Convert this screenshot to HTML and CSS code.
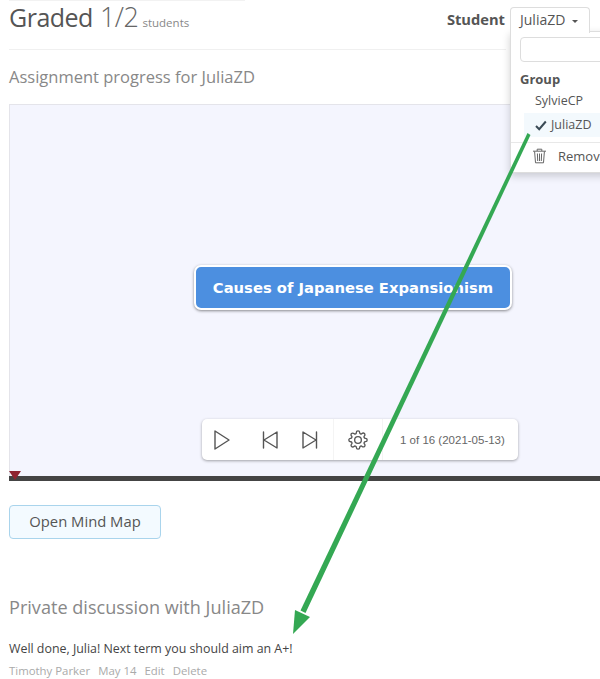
FILE: index.html
```html
<!DOCTYPE html>
<html lang="en">
<head>
<meta charset="utf-8">
<title>Graded</title>
<link rel="stylesheet" href="styles.css">
</head>
<body>
<div class="page">
  <div class="topline"></div>
  <header class="head">
    <h1 class="title">Graded <span class="count">1/2</span> <small class="unit">students</small></h1>
    <div class="picker">
      <span class="picker-label">Student</span>
      <div class="tab">JuliaZD <span class="caret"></span></div>
    </div>
  </header>
  <h2 class="section">Assignment progress for JuliaZD</h2>
  <div class="canvas">
    <div class="node">Causes of Japanese Expansionism</div>
    <div class="player">
      <div class="player-group">
        <svg class="pi" width="16" height="20" viewBox="0 0 16 20"><path d="M1 1 L15 10 L1 19 Z"/></svg>
        <svg class="pi prev" width="16" height="20" viewBox="0 0 16 20"><path d="M1.500 2 V18 M15 2 L2 10 L15 18 Z"/></svg>
        <svg class="pi next" width="16" height="20" viewBox="0 0 16 20"><path d="M14.500 2 V18 M1 2 L14 10 L1 18 Z"/></svg>
      </div>
      <div class="player-group gear">
        <svg class="pi gear-icon" width="20" height="20" viewBox="0 0 24 24"><circle cx="12" cy="12" r="4"/><path d="M19.4 15a1.65 1.65 0 0 0 .33 1.82l.06.06a2 2 0 0 1 0 2.83 2 2 0 0 1-2.83 0l-.06-.06a1.65 1.65 0 0 0-1.82-.33 1.65 1.65 0 0 0-1 1.51V21a2 2 0 0 1-2 2 2 2 0 0 1-2-2v-.09A1.65 1.65 0 0 0 9 19.4a1.65 1.65 0 0 0-1.82.33l-.06.06a2 2 0 0 1-2.83 0 2 2 0 0 1 0-2.83l.06-.06a1.65 1.65 0 0 0 .33-1.82 1.65 1.65 0 0 0-1.51-1H3a2 2 0 0 1-2-2 2 2 0 0 1 2-2h.09A1.65 1.65 0 0 0 4.6 9a1.65 1.65 0 0 0-.33-1.82l-.06-.06a2 2 0 0 1 0-2.83 2 2 0 0 1 2.83 0l.06.06a1.65 1.65 0 0 0 1.82.33H9a1.65 1.65 0 0 0 1-1.51V3a2 2 0 0 1 2-2 2 2 0 0 1 2 2v.09a1.65 1.65 0 0 0 1 1.51 1.65 1.65 0 0 0 1.82-.33l.06-.06a2 2 0 0 1 2.83 0 2 2 0 0 1 0 2.83l-.06.06a1.65 1.65 0 0 0-.33 1.82V9a1.65 1.65 0 0 0 1.51 1H21a2 2 0 0 1 2 2 2 2 0 0 1-2 2h-.09a1.65 1.65 0 0 0-1.51 1z"/></svg>
      </div>
      <div class="player-info">1 of 16 (2021-05-13)</div>
    </div>
  </div>
  <div class="timeline"><span class="marker"></span></div>
  <button class="open-btn" type="button">Open Mind Map</button>
  <h2 class="section discussion">Private discussion with JuliaZD</h2>
  <p class="comment">Well done, Julia! Next term you should aim an A+!</p>
  <div class="meta"><span>Timothy Parker</span><span>May 14</span><span>Edit</span><span>Delete</span></div>

  <div class="menu">
    <div class="search"></div>
    <div class="group-label">Group</div>
    <div class="opt">SylvieCP</div>
    <div class="opt selected"><svg class="check" width="12" height="11" viewBox="0 0 12 11"><path d="M1 6 L4.200 9.200 L10.800 1.500"/></svg>JuliaZD</div>
    <div class="remove">
      <svg class="trash" width="15" height="16" viewBox="0 0 15 16"><path d="M1 3.200h13M5.200 3V1.200h4.600V3M2.600 3.400l.9 11.400h8l.9-11.400M5.400 5.500l.3 7.500M7.500 5.500v7.500M9.600 5.500l-.3 7.500"/></svg>
      <span>Remove</span>
    </div>
  </div>

  <svg class="arrow" width="600" height="679" viewBox="0 0 600 679">
    <path class="arrow-shape" d="M527.500 133 L530.500 135 L305.500 613 L300.500 610.500 Z"/>
    <path class="arrow-shape" d="M293 634 L295 610 L310 617 Z"/>
  </svg>
</div>
</body>
</html>
```

FILE: styles.css
```css
* { box-sizing: border-box; }
html, body { margin: 0; padding: 0; background: #fff; }
.page {
  position: relative;
  width: 600px;
  height: 679px;
  overflow: hidden;
  padding-left: 9px;
  font-family: "Open Sans", "Noto Sans", sans-serif;
  color: #555;
}
.topline { position: absolute; left: 9px; top: 0; width: 236px; height: 1px; background: #f2f2f2; }
.head {
  display: flex;
  justify-content: space-between;
  align-items: flex-start;
  height: 50px;
  border-bottom: 1px solid #f0f0f0;
  margin-right: 94px;
}
.title { margin: 0; font-size: 25px; letter-spacing: -.5px; line-height: 34px; font-weight: 400; color: #555; white-space: nowrap; }
.count { font-size: 27px; font-weight: 300; letter-spacing: -.5px; color: #666; margin-left: 1px; }
.unit { font-size: 11.500px; letter-spacing: 0; color: #888; margin-left: -2px; }
.picker { display: flex; align-items: flex-start; position: absolute; right: 10px; top: 7px; z-index: 3; }
.picker-label { font-size: 14.700px; font-weight: 700; color: #555; line-height: 24px; margin-right: 5px; }
.tab {
  width: 80px; height: 26px; padding: 0 9px;
  border: 1px solid #ddd; border-bottom: 0; border-radius: 4px 4px 0 0;
  font-size: 14px; line-height: 23px; color: #555; background: #fff; white-space: nowrap;
}
.caret { display: inline-block; width: 0; height: 0; margin-left: 3px; vertical-align: middle; border: 3px solid transparent; border-top-color: #555; border-bottom: 0; }
.section { margin: 15px 0 16px; font-size: 16.500px; line-height: 23px; font-weight: 400; color: #888; }
.canvas {
  position: relative;
  height: 372px;
  background: #f4f5fe;
  border: 1px solid #e4e4ea;
  border-bottom: 0;
  border-right: 0;
}
.node {
  position: absolute; left: 184px; top: 160px; width: 318px; height: 45px;
  background: #4c8fe0; border: 2px solid #fff; border-radius: 7px;
  box-shadow: 0 1px 3px rgba(0,0,0,.45);
  color: #fff; font: 700 14.750px/41px "DejaVu Sans", Verdana, sans-serif; text-align: center; white-space: nowrap;
}
.player {
  position: absolute; left: 192px; top: 314px; width: 316px; height: 41px;
  display: flex; align-items: center;
  background: #fff; border-radius: 5px;
  box-shadow: 0 1px 3px rgba(0,0,0,.35);
  color: #666;
}
.player-group { display: flex; align-items: center; height: 100%; }
.pi { fill: none; stroke: #555; stroke-width: 1.400; stroke-linejoin: round; stroke-linecap: round; }
.player-group:first-child { width: 132px; padding-left: 12px; border-right: 1px solid #f4f4f4; }
.prev { margin-left: 32px; }
.next { margin-left: 24px; }
.gear { width: 49px; justify-content: center; border-right: 1px solid #f4f4f4; }
.gear-icon { stroke-width: 1.600; }
.player-info { font: 400 11.500px "Liberation Sans", Arial, sans-serif; margin-left: 17px; white-space: nowrap; }
.timeline { position: relative; height: 5px; background: #444; }
.marker { position: absolute; left: 0; top: -5px; width: 0; height: 0; border-left: 6.500px solid transparent; border-right: 6.500px solid transparent; border-top: 9px solid #8e2431; }
.open-btn {
  display: block; margin-top: 24px; padding: 0 0 2px; width: 152px; height: 34px;
  background: #f3faff; border: 1px solid #a9d4ec; border-radius: 4px;
  font: 400 14.800px "Open Sans", sans-serif; color: #555;
}
.discussion { margin: 56px 0 0; font-size: 18.100px; line-height: 24px; }
.comment { margin: 21px 0 0; font-size: 12.400px; line-height: 18px; color: #444; }
.meta { display: flex; gap: 8px; margin-top: 4px; font-size: 11.400px; line-height: 18px; color: #aaa; }
.menu {
  position: absolute; left: 510px; top: 31px; width: 130px; height: 142px;
  background: #fff; border: 1px solid #ddd;
  box-shadow: 0 3px 8px rgba(0,0,0,.18);
  font-size: 12.500px; color: #555;
  z-index: 2;
}
.search { margin: 5px 0 0 9px; height: 25px; border: 1px solid #ddd; border-radius: 4px; }
.group-label { margin: 8px 0 0 9px; font-weight: 700; line-height: 18px; font-size: 13px; }
.opt { margin-left: 13px; padding-left: 11px; height: 24px; line-height: 24px; margin-top: 1px; }
.opt.selected { background: #f3f9fd; padding-left: 11px; display: flex; align-items: center; margin-top: 0; }
.check { fill: none; stroke: #3a4a55; stroke-width: 2; margin-right: 4px; }
.remove { display: flex; align-items: center; margin-top: 5px; padding: 0 0 3px 21px; border-top: 1px solid #e8e8e8; height: 29px; font-size: 13px; white-space: nowrap; }
.trash { fill: none; stroke: #666; stroke-width: 1; margin-right: 11px; }
.arrow { position: absolute; left: 0; top: 0; z-index: 5; pointer-events: none; }
.arrow-shape { fill: #34a853; }
```
